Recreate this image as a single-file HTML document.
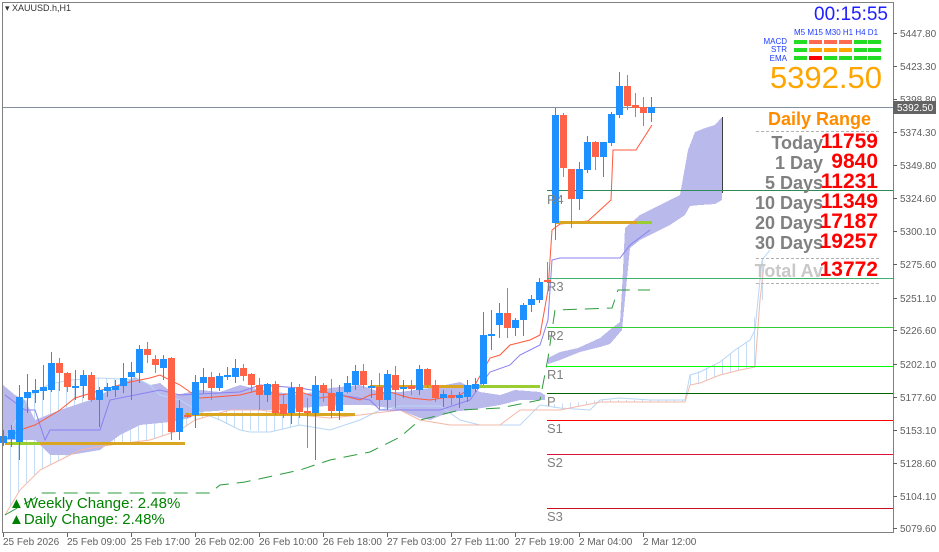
<!DOCTYPE html>
<html><head><meta charset="utf-8"><style>
html,body{margin:0;padding:0;background:#fff;}
body{width:939px;height:552px;overflow:hidden;position:relative;font-family:"Liberation Sans",sans-serif;}
svg{position:absolute;left:0;top:0;}
.t{position:absolute;white-space:nowrap;}
</style></head><body>
<svg id="s" width="939" height="552" viewBox="0 0 939 552" shape-rendering="crispEdges">
<defs>
<pattern id="hb" width="8" height="600" patternUnits="userSpaceOnUse"><rect x="2" y="0" width="1" height="600" fill="#c6dcf4"/></pattern>
</defs>
<rect x="0" y="0" width="939" height="552" fill="#fff"/>
<polygon fill="url(#hb)" points="5,440 30,395 50,384 70,380 100,378 140,380 150,385 160,395 180,400 195,420 180,430 150,440 110,445 80,450 60,460 40,470 20,490 5,515"/>
<polygon fill="url(#hb)" points="545,405 600,400 650,400 685,400 690,375 720,362 750,340 758,300 762,260 770,250 770,300 760,300 755,367 720,375 700,383 690,385 685,402 600,402 560,410"/>
<polygon fill="url(#hb)" points="160,395 200,412 240,430 270,432 300,425 300,415 260,410 230,410 195,420"/>
<polygon fill="#b9b9ec" points="3,385 15,395 25,400 35,420 60,410 90,400 120,385 135,377 150,385 160,383 175,395 200,390 220,392 240,385 260,390 300,395 330,388 360,385 380,392 400,392 430,388 460,382 480,392 500,395 515,390 540,392 545,395 545,400 520,400 500,405 470,410 450,412 430,420 420,418 400,410 370,405 340,405 300,408 280,410 250,410 230,410 200,412 190,418 170,422 140,425 120,435 100,450 70,455 50,455 35,440 20,440 3,440"/>
<polygon fill="#b9b9ec" points="548,358 560,352 578,348 600,338 612,328 620,322 622,290 625,228 640,215 660,205 680,195 688,150 695,132 705,128 715,125 722,117 722,200 715,204 700,205 690,206 685,215 670,225 650,235 640,240 630,248 622,330 610,344 600,347 580,352 560,360 548,364"/>
<line x1="722.5" y1="117" x2="722.5" y2="193" stroke="#404040"/>
<g fill="none" shape-rendering="auto" stroke-width="1">
<polyline stroke="#b9d6f5" points="5,440 30,395 50,384 70,380 100,378 140,380 150,385 160,395 180,400 200,412 220,420 240,430 250,432 270,432 300,425 330,430 360,420 380,410 400,406 440,406 460,420 480,425 520,425 540,405 560,408 590,410 600,400 620,398 650,400 685,400 690,375 700,372 720,362 735,350 750,340 755,330 758,300 762,260 770,250"/>
<polyline stroke="#f3b8a8" points="5,515 20,490 40,470 60,460 80,450 110,445 150,440 180,430 195,420 230,410 260,410 300,415 330,418 360,415 400,410 420,420 450,425 500,425 520,410 545,410 560,410 600,402 685,402 690,385 700,383 720,375 740,370 755,367 760,300 764,265"/>
<polyline stroke="#8a80f0" points="5,395 25,410 35,410 45,440 50,430 100,430 110,400 160,390 180,395 240,392 260,385 300,388 340,395 370,400 380,410 440,410 470,400 490,372 510,365 520,355 540,345 548,320 552,260 560,258 620,258 630,245 650,230"/>
<polyline stroke="#ff5a3c" points="5,440 20,430 35,425 60,410 75,398 95,392 130,382 150,378 160,375 180,385 190,392 200,398 215,397 240,395 260,390 280,395 300,392 320,398 340,395 360,400 370,395 390,392 410,398 430,400 460,395 475,385 490,358 500,355 510,345 530,340 540,335 548,290 552,230 560,224 588,221 611,200 613,150 636,150 652,125"/>
<polyline stroke="#2e9b3e" stroke-dasharray="14,8" points="5,515 35,498 38,493 210,493 220,485 245,482 300,470 330,460 370,452 400,437 420,420 440,415 460,410 500,408 540,400 548,358 555,310 612,308 618,290 650,290"/>
</g>
<rect x="5" y="442" width="180" height="3" fill="#daa520"/>
<rect x="10" y="442" width="30" height="3" fill="#9acd32"/>
<rect x="185" y="413" width="170" height="3" fill="#daa520"/>
<rect x="370" y="385" width="170" height="3" fill="#daa520"/>
<rect x="480" y="385" width="60" height="3" fill="#9acd32"/>
<rect x="555" y="221" width="97" height="3" fill="#daa520"/>
<rect x="637" y="221" width="15" height="3" fill="#9acd32"/>
<line x1="547" y1="190.5" x2="893" y2="190.5" stroke="#2e8b57"/>
<line x1="547" y1="278.5" x2="893" y2="278.5" stroke="#3cb371"/>
<line x1="547" y1="327.5" x2="893" y2="327.5" stroke="#32cd32"/>
<line x1="547" y1="366.5" x2="893" y2="366.5" stroke="#00ff00"/>
<line x1="547" y1="393.5" x2="893" y2="393.5" stroke="#006400"/>
<line x1="547" y1="420.5" x2="893" y2="420.5" stroke="#ff0000"/>
<line x1="547" y1="454.5" x2="893" y2="454.5" stroke="#dc143c"/>
<line x1="547" y1="508.5" x2="893" y2="508.5" stroke="#c8101e"/>
<line x1="2" y1="107.5" x2="893" y2="107.5" stroke="#8090a0"/>
<g id="cd"></g>
<g font-family="Liberation Sans" font-size="13" fill="#808080">
<text x="547" y="204">R4</text><text x="547" y="291">R3</text><text x="547" y="340">R2</text><text x="547" y="379">R1</text><text x="547" y="406">P</text><text x="547" y="433">S1</text><text x="547" y="467">S2</text><text x="547" y="521">S3</text>
</g>
<rect x="2.5" y="2.5" width="891" height="530" fill="none" stroke="#808080"/>
<g id="ax" font-family="Liberation Sans" font-size="10" fill="#606060"></g>
<rect x="893" y="101" width="43" height="13" fill="#646464"/>
<text x="897" y="111" font-family="Liberation Sans" font-size="10" fill="#fff">5392.50</text>
<g id="bars"></g>
<g stroke="#b0b0b0" stroke-dasharray="3,2"><line x1="756" y1="131.5" x2="880" y2="131.5"/><line x1="756" y1="258.5" x2="880" y2="258.5"/><line x1="756" y1="283.5" x2="880" y2="283.5"/></g>
</svg>

<div class="t" style="left:5px;top:3px;font-size:9px;color:#333">▾ XAUUSD.h,H1</div>
<div class="t" style="right:51px;top:4px;font-size:19px;color:#1e1eff">00:15:55</div>
<div class="t" style="left:794px;top:28px;font-size:8px;color:#1e3cff">M5 M15 M30 H1 H4 D1</div>
<div class="t" style="right:152px;top:38px;font-size:8px;line-height:8.3px;color:#1e3cff;text-align:right">MACD<br>STR<br>EMA</div>
<div class="t" style="right:57px;top:60px;font-size:31px;color:#ffa500">5392.50</div>
<div class="t" style="left:768px;top:109px;font-size:18px;font-weight:bold;color:#ff8c00">Daily Range</div>
<div class="t" style="right:116px;top:133px;font-size:18px;font-weight:bold;color:#808080;line-height:20px;text-align:right">Today<br>1 Day<br>5 Days<br>10 Days<br>20 Days<br>30 Days</div>
<div class="t" style="right:116px;top:261px;font-size:18px;font-weight:bold;color:#c8c8c8;line-height:20px">Total Av</div>
<div class="t" style="right:61px;top:132px;font-size:21px;font-weight:bold;color:#ff0000;line-height:20px;text-align:right">11759<br>9840<br>11231<br>11349<br>17187<br>19257</div>
<div class="t" style="right:61px;top:260px;font-size:21px;font-weight:bold;color:#ff0000;line-height:20px">13772</div>
<div class="t" style="left:9px;top:496px;font-size:15px;color:#008000;line-height:16px">▲Weekly Change: 2.48%<br>▲Daily Change: 2.48%</div>

<script>
var C=[[3,'B',436,443,430,446],[11,'B',430,439,425,447],[19,'B',397,442,385,460],[27,'B',392,398,374,413],[35,'B',390,393,379,403],[43,'B',387,391,365,400],[51,'B',363,390,352,392],[59,'R',363,373,358,391],[67,'R',373,387,372,392],[75,'B',386,388,370,400],[83,'B',375,386,370,398],[91,'R',375,400,372,402],[99,'B',390,400,387,427],[107,'B',387,391,383,397],[115,'B',386,390,380,397],[123,'B',378,386,363,393],[131,'B',372,377,362,400],[139,'B',349,373,345,383],[147,'R',349,355,342,363],[155,'R',359,365,355,373],[163,'B',359,368,355,380],[171,'R',358,432,357,440],[179,'B',408,432,400,440],[187,'R',415,417,413,418],[195,'B',382,415,375,428],[203,'B',377,383,368,393],[211,'R',377,388,372,400],[219,'B',376,388,373,391],[227,'B',375,377,367,380],[235,'B',368,377,359,383],[243,'R',368,376,364,381],[251,'R',374,385,373,393],[259,'R',385,395,378,410],[267,'B',384,395,383,402],[275,'R',384,413,381,415],[283,'R',404,414,395,418],[291,'B',388,413,382,424],[299,'R',387,412,384,418],[307,'R',411,413,398,448],[315,'B',385,413,376,460],[323,'R',385,393,383,402],[331,'R',393,411,379,418],[339,'B',392,411,385,420],[347,'B',383,392,376,393],[355,'B',371,385,365,390],[363,'R',371,385,364,388],[371,'B',386,388,380,398],[379,'R',387,400,373,410],[387,'B',374,400,370,410],[395,'R',375,390,366,408],[403,'B',387,388,380,398],[411,'R',386,389,380,395],[419,'B',369,390,365,395],[427,'R',369,385,368,388],[435,'R',385,398,380,402],[443,'B',394,398,390,407],[451,'R',395,398,390,405],[459,'B',395,398,392,408],[467,'B',385,397,380,402],[475,'B',384,389,378,392],[483,'B',335,384,312,385],[491,'B',334,336,310,350],[499,'B',313,325,303,338],[507,'R',313,328,288,338],[515,'B',320,328,318,336],[523,'B',305,320,303,336],[531,'B',299,305,295,312],[539,'B',282,300,278,303],[547,'R',280,282,262,283],[555,'B',115,223,108,240],[563,'R',115,168,113,177],[571,'R',169,199,169,228],[579,'B',169,199,162,210],[587,'B',142,170,136,173],[595,'R',142,157,141,170],[603,'B',142,157,142,177],[611,'B',114,143,112,146],[619,'B',86,115,72,118],[627,'R',86,106,75,110],[635,'R',105,108,93,117],[643,'R',107,113,97,126],[651,'B',107,113,97,122]];
var h='';C.forEach(function(c){var col=c[1]=='B'?'#1e90ff':'#ff6347';h+='<rect x="'+c[0]+'" y="'+c[4]+'" width="1" height="'+(c[5]-c[4])+'" fill="'+col+'"/><rect x="'+(c[0]-3)+'" y="'+c[2]+'" width="7" height="'+Math.max(2,c[3]-c[2])+'" fill="'+col+'"/>';});
document.getElementById('cd').innerHTML=h;
var P=[['5447.80',33],['5423.30',66],['5398.80',99],['5374.30',132],['5349.80',165],['5324.60',198],['5300.10',231],['5275.60',264],['5251.10',298],['5226.60',330],['5202.10',364],['5177.60',397],['5153.10',430],['5128.60',463],['5104.10',496],['5079.60',528]];
var a='';P.forEach(function(p){a+='<rect x="893" y="'+p[1]+'" width="4" height="1" fill="#606060"/><text x="900" y="'+(p[1]+4)+'">'+p[0]+'</text>';});
var T=[['25 Feb 2026',3],['25 Feb 09:00',67],['25 Feb 17:00',131],['26 Feb 02:00',195],['26 Feb 10:00',259],['26 Feb 18:00',323],['27 Feb 03:00',387],['27 Feb 11:00',451],['27 Feb 19:00',515],['2 Mar 04:00',579],['2 Mar 12:00',643]];
T.forEach(function(t){a+='<rect x="'+t[1]+'" y="533" width="1" height="4" fill="#606060"/><text x="'+t[1]+'" y="545">'+t[0]+'</text>';});
document.getElementById('ax').innerHTML=a;
var xs=[794,809,824,839,854,868],rows=[[40,['#22dd22','#ff6a50','#ff6a50','#ff6a50','#22dd22','#22dd22']],[48,['#22dd22','#ffa500','#ffa500','#ffa500','#22dd22','#22dd22']],[56,['#22dd22','#ff0000','#22dd22','#22dd22','#22dd22','#22dd22']]];
var b='';rows.forEach(function(r){xs.forEach(function(x,i){b+='<rect x="'+x+'" y="'+r[0]+'" width="13" height="4" fill="'+r[1][i]+'"/>';});});
document.getElementById('bars').innerHTML=b;
</script>
</body></html>
